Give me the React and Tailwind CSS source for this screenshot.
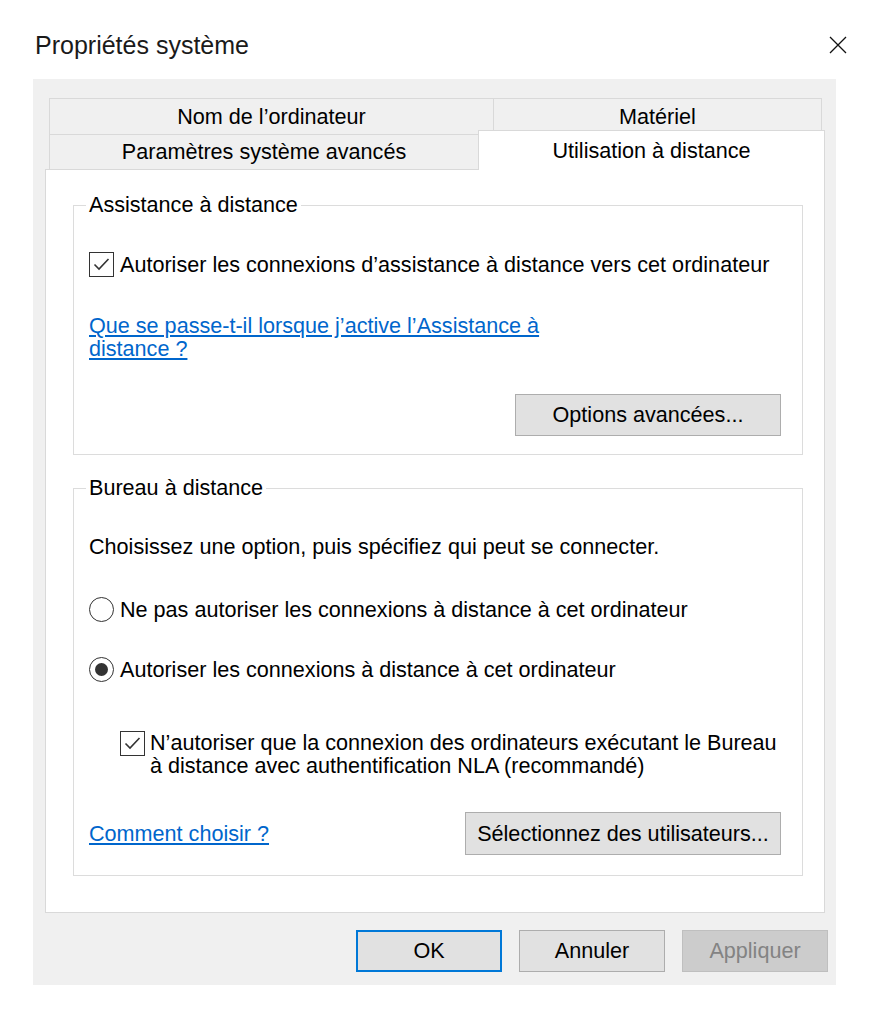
import React from 'react';

const CheckBox = () => (
    <span className="flex size-[25px] shrink-0 items-center justify-center border border-[#333333] bg-white">
        <svg width="19" height="19" viewBox="0 0 19 19" fill="none">
            <polyline points="2.5,9.5 7,14 16.5,4" stroke="#333333" strokeWidth="1.6" />
        </svg>
    </span>
);

const Radio = ({ checked }) => (
    <span className="flex size-[25px] shrink-0 items-center justify-center rounded-full border-[1.5px] border-[#333333] bg-white">
        {checked && <span className="size-[13px] rounded-full bg-[#333333]" />}
    </span>
);

const WinButton = ({ children, className = '' }) => (
    <div className={`flex h-[42px] items-center justify-center border ${className}`}>
        {children}
    </div>
);

const App = () => {
    return (
        <div className="min-h-[1021px] w-[879px] bg-white font-['Liberation_Sans',Arial,sans-serif] text-[21.6px] leading-[22px] text-black">
            {/* Title bar */}
            <div className="flex h-[79px] items-center justify-between pl-[35px] pr-[32px] pt-[10px]">
                <span className="text-[25px] leading-[28px] text-[#1a1a1a]">Propriétés système</span>
                <svg width="18" height="18" viewBox="0 0 18 18">
                    <path d="M1 1 L17 17 M17 1 L1 17" stroke="#111111" strokeWidth="1.3" />
                </svg>
            </div>

            {/* Dialog body */}
            <div className="ml-[33px] w-[803px] bg-[#f0f0f0] pb-[13px] pl-[12px] pt-[19px]">
                {/* Tabs - back row */}
                <div className="ml-[4px] flex h-[36px]">
                    <div className="flex w-[444px] items-center justify-center border-l border-t border-[#d9d9d9]">
                        Nom de l’ordinateur
                    </div>
                    <div className="flex w-[329px] items-center justify-center border-l border-r border-t border-[#d9d9d9]">
                        Matériel
                    </div>
                </div>
                {/* Tabs - front row */}
                <div className="relative z-10 -mb-px -mt-[4px] flex items-start">
                    <div className="ml-[4px] mt-[4px] flex h-[35px] w-[429px] items-center justify-center border-l border-t border-[#d9d9d9]">
                        Paramètres système avancés
                    </div>
                    <div className="flex h-[40px] w-[347px] items-center justify-center border-l border-r border-t border-[#d9d9d9] bg-white">
                        Utilisation à distance
                    </div>
                </div>

                {/* Tab panel */}
                <div className="h-[744px] w-[780px] border border-[#d9d9d9] bg-white pl-[27px] pr-[21px] pt-[24px]">
                    <fieldset className="border border-[#dcdcdc] pb-[18px]">
                        <legend className="ml-[12px] px-[3px]">Assistance à distance</legend>
                        <div className="mt-[36px] flex items-center gap-[6px] pl-[15px]">
                            <CheckBox />
                            <span>Autoriser les connexions d’assistance à distance vers cet ordinateur</span>
                        </div>
                        <div className="mt-[37px] pl-[15px] leading-[23px] text-[#0066cc] underline">
                            Que se passe-t-il lorsque j’active l’Assistance à<br />distance ?
                        </div>
                        <div className="mr-[21px] mt-[34px] flex justify-end">
                            <WinButton className="w-[266px] border-[#adadad] bg-[#e1e1e1]">Options avancées...</WinButton>
                        </div>
                    </fieldset>

                    <fieldset className="mt-[22px] border border-[#dcdcdc] pb-[20px]">
                        <legend className="ml-[12px] px-[3px]">Bureau à distance</legend>
                        <div className="mt-[37px] pl-[15px]">Choisissez une option, puis spécifiez qui peut se connecter.</div>
                        <div className="mt-[39px] flex items-center gap-[6px] pl-[15px]">
                            <Radio />
                            <span>Ne pas autoriser les connexions à distance à cet ordinateur</span>
                        </div>
                        <div className="mt-[35px] flex items-center gap-[6px] pl-[15px]">
                            <Radio checked />
                            <span>Autoriser les connexions à distance à cet ordinateur</span>
                        </div>
                        <div className="mt-[49px] flex items-start gap-[5px] pl-[46px]">
                            <CheckBox />
                            <span className="leading-[23px]">
                                N’autoriser que la connexion des ordinateurs exécutant le Bureau<br />
                                à distance avec authentification NLA (recommandé)
                            </span>
                        </div>
                        <div className="mt-[35px] flex items-center justify-between pl-[15px] pr-[21px]">
                            <span className="text-[#0066cc] underline">Comment choisir ?</span>
                            <WinButton className="h-[43px] w-[316px] border-[#adadad] bg-[#e1e1e1]">Sélectionnez des utilisateurs...</WinButton>
                        </div>
                    </fieldset>
                </div>

                {/* Dialog buttons */}
                <div className="mt-[17px] flex justify-end gap-[17px] pr-[8px]">
                    <WinButton className="w-[146px] border-2 border-[#0078d7] bg-[#e1e1e1]">OK</WinButton>
                    <WinButton className="w-[146px] border-[#adadad] bg-[#e1e1e1]">Annuler</WinButton>
                    <WinButton className="w-[146px] border-[#bfbfbf] bg-[#cccccc] text-[#838383]">Appliquer</WinButton>
                </div>
            </div>
        </div>
    );
};

export default App;
